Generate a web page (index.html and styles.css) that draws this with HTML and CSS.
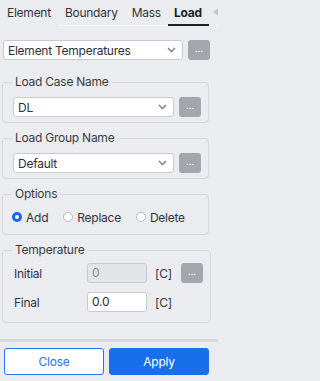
FILE: index.html
```html
<!DOCTYPE html>
<html>
<head>
<meta charset="utf-8">
<link rel="stylesheet" href="styles.css">
</head>
<body>
<div class="tabs">
  <div class="tab first">Element</div>
  <div class="tab">Boundary</div>
  <div class="tab">Mass</div>
  <div class="tab active">Load</div>
  <div class="tab-fill"><svg class="scroll-arrow" width="8" height="10" viewBox="0 0 8 10"><path d="M0 5 L7 0 L7 10 Z" fill="#c4c5ca"/></svg></div>
</div>

<div class="top-row">
  <div class="select wide"><span>Element Temperatures</span><svg class="chev" width="9" height="6" viewBox="0 0 9 6"><path d="M1 1 L4.5 4.5 L8 1" fill="none" stroke="#7a7b80" stroke-width="1.4"/></svg></div>
  <div class="dots">...</div>
</div>

<fieldset class="group first-group">
  <legend>Load Case Name</legend>
  <div class="row">
    <div class="select"><span>DL</span><svg class="chev" width="9" height="6" viewBox="0 0 9 6"><path d="M1 1 L4.5 4.5 L8 1" fill="none" stroke="#7a7b80" stroke-width="1.4"/></svg></div>
    <div class="dots">...</div>
  </div>
</fieldset>

<fieldset class="group">
  <legend>Load Group Name</legend>
  <div class="row">
    <div class="select"><span>Default</span><svg class="chev" width="9" height="6" viewBox="0 0 9 6"><path d="M1 1 L4.5 4.5 L8 1" fill="none" stroke="#7a7b80" stroke-width="1.4"/></svg></div>
    <div class="dots">...</div>
  </div>
</fieldset>

<fieldset class="group options">
  <legend>Options</legend>
  <div class="radios">
    <label class="radio"><span class="dot checked"></span>Add</label>
    <label class="radio"><span class="dot"></span>Replace</label>
    <label class="radio"><span class="dot"></span>Delete</label>
  </div>
</fieldset>

<fieldset class="group temp">
  <legend>Temperature</legend>
  <div class="trow">
    <span class="tlabel">Initial</span>
    <div class="input disabled">0</div>
    <span class="unit">[C]</span>
    <div class="dots">...</div>
  </div>
  <div class="trow">
    <span class="tlabel">Final</span>
    <div class="input">0.0</div>
    <span class="unit">[C]</span>
  </div>
</fieldset>

<div class="footer">
  <button class="btn close">Close</button>
  <button class="btn apply">Apply</button>
</div>
</body>
</html>
```

FILE: styles.css
```css
html, body {
  margin: 0;
  padding: 0;
}
body {
  width: 218px;
  height: 381px;
  overflow: hidden;
  background: #ebecf0;
  font-family: Inter, "Noto Sans", sans-serif;
  font-size: 12px;
  letter-spacing: -0.25px;
  color: #33343a;
}
.tabs {
  display: flex;
  height: 26px;
  box-sizing: border-box;
}
.tab {
  padding: 4px 7px 0;
  line-height: 18px;
  border-bottom: 1px solid #f6f6f8;
  box-sizing: border-box;
  height: 26px;
  white-space: nowrap;
}
.tab.first {
  border-bottom-color: transparent;
}
.tab.active {
  font-weight: 700;
  color: #1e1f24;
  border-bottom: 2px solid #1e1f24;
  padding-left: 6px;
  padding-right: 7px;
}
.tab-fill {
  flex: 1;
  border-bottom: 1px solid #f6f6f8;
  display: flex;
  justify-content: flex-end;
  overflow: hidden;
  padding-top: 7px;
  box-sizing: border-box;
  height: 26px;
}
.scroll-arrow {
  flex: none;
  margin-right: -3px;
}
.top-row {
  display: flex;
  gap: 5px;
  margin: 14px 8px 0 3px;
}
.select {
  flex: 1;
  height: 20px;
  box-sizing: border-box;
  background: #fff;
  border: 1px solid #c9cacf;
  border-radius: 3px;
  display: flex;
  align-items: center;
  justify-content: space-between;
  padding: 0 6px 0 4px;
  color: #2e2f35;
}
.chev {
  flex: none;
}
.dots {
  flex: none;
  width: 22px;
  height: 20px;
  background: #a3a6ad;
  border-radius: 3px;
  color: #fff;
  font-size: 9px;
  letter-spacing: 0;
  line-height: 17px;
  text-align: center;
}
.group {
  margin: 8px 9px 0 2px;
  padding: 8px 7px 5px 10px;
  border: 1px solid #d6d7dc;
  border-radius: 4px;
}
.group.first-group {
  margin-top: 15px;
}
.group legend {
  padding: 0 3px;
  margin-left: -1px;
  line-height: 14px;
  color: #3a3b41;
}
.row {
  display: flex;
  gap: 5px;
}
.options {
  padding-top: 6px;
  padding-bottom: 7px;
}
.radios {
  display: flex;
  height: 20px;
  align-items: center;
  margin-left: -1px;
}
.radio {
  display: flex;
  align-items: center;
  gap: 4px;
  margin-right: 15px;
}
.dot {
  width: 10px;
  height: 10px;
  box-sizing: border-box;
  border-radius: 50%;
  border: 1px solid #b9bac0;
  background: #fff;
}
.dot.checked {
  border: 3px solid #1566e6;
}
.temp {
  padding-top: 6px;
  padding-bottom: 10px;
}
.trow {
  display: flex;
  align-items: center;
  height: 20px;
  margin-bottom: 9px;
}
.trow:last-child {
  margin-bottom: 0;
}
.tlabel {
  width: 73px;
  margin-left: 1px;
}
.input {
  width: 60px;
  height: 20px;
  box-sizing: border-box;
  border: 1px solid #c9cacf;
  border-radius: 3px;
  background: #fff;
  padding-left: 4px;
  line-height: 18px;
  color: #2e2f35;
}
.input.disabled {
  background: #e3e4e8;
  color: #8a8b90;
}
.unit {
  width: 34px;
  padding-left: 8px;
  box-sizing: border-box;
}
.footer {
  margin-top: 16px;
  border-top: 3px solid #d6d7db;
  display: flex;
  gap: 5px;
  padding: 6px 9px 0 4px;
}
.btn {
  flex: 1;
  height: 27px;
  border-radius: 3px;
  font-family: Inter, "Noto Sans", sans-serif;
  font-size: 12px;
  letter-spacing: -0.25px;
  cursor: pointer;
}
.close {
  background: #fff;
  border: 1px solid #2a72e8;
  color: #2f74e6;
}
.apply {
  background: #176fe9;
  border: 1px solid #176fe9;
  color: #fff;
}
```
